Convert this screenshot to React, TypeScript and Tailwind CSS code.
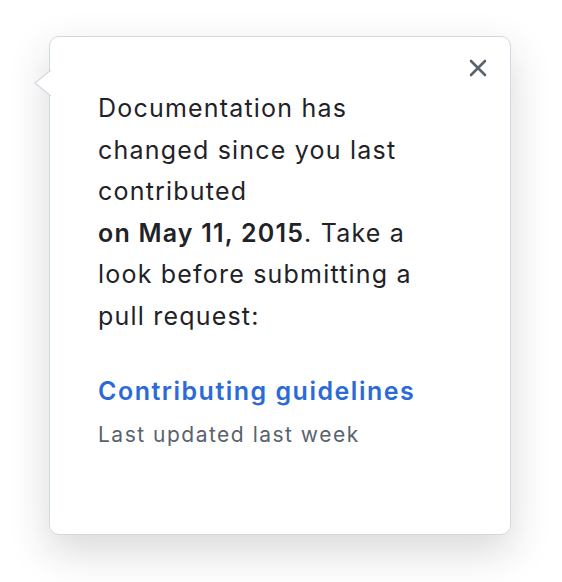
import React from 'react';

const Popover: React.FC = () => {
    return (
        <div className="relative w-[462px] h-[499px] bg-white border border-[#d1d9e0] rounded-[10px] shadow-[0_16px_40px_rgba(37,41,46,0.18)]">
            {/* caret */}
            <svg className="absolute left-[-16px] top-[33px]" width="17" height="26" viewBox="0 0 17 26">
                <path d="M17 0 L1 13 L17 26" fill="#ffffff" stroke="#d1d9e0" strokeWidth="1.2" />
            </svg>

            <button type="button" className="absolute right-[22px] top-[21px] w-[20px] h-[20px] flex items-center justify-center text-[#59636e]">
                <svg width="18" height="18" viewBox="0 0 18 18">
                    <path d="M2 2 L16 16 M16 2 L2 16" stroke="currentColor" strokeWidth="2.6" strokeLinecap="round" />
                </svg>
            </button>

            <div className="pl-[48px] pt-[51px] text-[#1f2328] text-[25px] leading-[41.5px] tracking-[1.2px]">
                <p>
                    Documentation has<br />
                    changed since you last<br />
                    contributed<br />
                    <strong className="font-semibold">on May 11, 2015</strong>. Take a<br />
                    look before submitting a<br />
                    pull request:
                </p>
                <a href="#" className="block mt-[34px] font-semibold text-[#2c6bd7] tracking-[1.5px]">
                    Contributing guidelines
                </a>
                <p className="text-[21px] leading-[30px] text-[#59636e] mt-[7px] tracking-[1.5px]">Last updated last week</p>
            </div>
        </div>
    );
};

export default function App() {
    return (
        <div className="min-h-screen bg-white pt-[36px] pl-[49px]" style={{ fontFamily: 'Inter, "Noto Sans", sans-serif' }}>
            <Popover />
        </div>
    );
}
